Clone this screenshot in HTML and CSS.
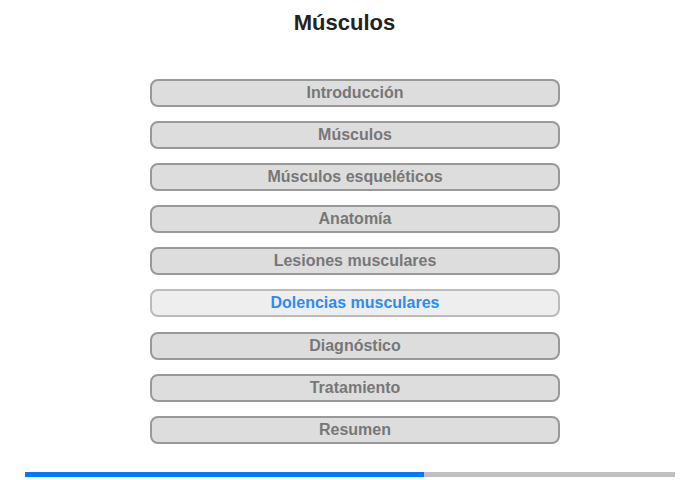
FILE: index.html
```html
<!DOCTYPE html>
<html lang="es">
<head>
    <meta charset="UTF-8">
    <meta name="viewport" content="width=device-width, initial-scale=1.0">
    <title>Músculos</title>
    <link rel="stylesheet" href="styles.css">
</head>
<body>
    <div class="page">
        <h1 class="title">Músculos</h1>
        <nav class="menu">
            <button type="button" class="menuItem">Introducción</button>
            <button type="button" class="menuItem">Músculos</button>
            <button type="button" class="menuItem">Músculos esqueléticos</button>
            <button type="button" class="menuItem">Anatomía</button>
            <button type="button" class="menuItem">Lesiones musculares</button>
            <button type="button" class="menuItem active">Dolencias musculares</button>
            <button type="button" class="menuItem">Diagnóstico</button>
            <button type="button" class="menuItem">Tratamiento</button>
            <button type="button" class="menuItem">Resumen</button>
        </nav>
        <div class="progress">
            <div class="progressFill" style="width: 61.4%;"></div>
        </div>
    </div>
</body>
</html>
```

FILE: styles.css
```css
body {
    font-family: "Liberation Sans", Arial, sans-serif;
    background-color: #fff;
    margin: 0;
    padding: 0;
}

.page {
    width: 700px;
    height: 480px;
    display: flex;
    flex-direction: column;
}

.title {
    margin: 0;
    padding: 10px 11px 0 0;
    font-size: 22px;
    line-height: 26px;
    font-weight: bold;
    color: #222;
    text-align: center;
}

.menu {
    display: flex;
    flex-direction: column;
    gap: 14.1px;
    width: 410px;
    margin: 43px 0 0 150px;
}

.menuItem {
    box-sizing: border-box;
    height: 28px;
    padding: 0;
    background-color: #dddddd;
    border: 2px solid #999;
    border-radius: 8px;
    font-family: inherit;
    font-size: 16px;
    font-weight: bold;
    line-height: 24px;
    color: #777;
    text-align: center;
    cursor: pointer;
}

.menuItem.active {
    background-color: #eeeeee;
    border-color: #bbb;
    color: #2d8cf0;
}

.progress {
    width: 650px;
    height: 5px;
    margin: 28px 0 0 25px;
    background-color: #c0c0c0;
}

.progressFill {
    height: 100%;
    background-color: #0078ff;
}
```
